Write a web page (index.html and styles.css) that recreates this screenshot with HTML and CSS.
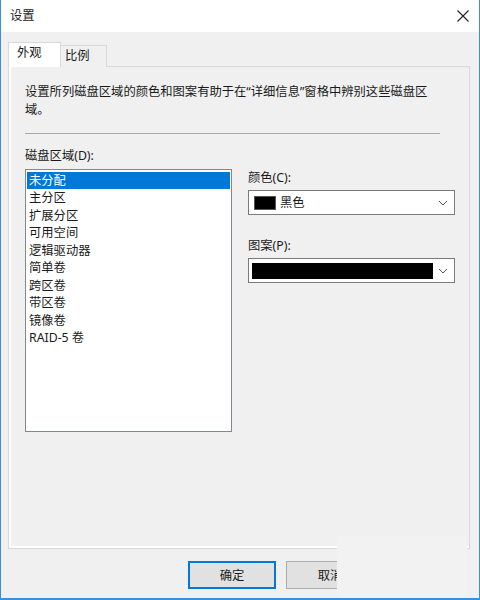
FILE: index.html
```html
<!DOCTYPE html>
<html lang="zh-CN">
<head>
<meta charset="utf-8">
<title>设置</title>
<link rel="stylesheet" href="styles.css">
</head>
<body>
<div class="window">
  <div class="titlebar">
    <span class="title">设置</span>
    <svg class="close" width="12" height="12" viewBox="0 0 12 12"><path d="M0.5 0.5 L11.5 11.5 M11.5 0.5 L0.5 11.5" stroke="#222" stroke-width="1.1" fill="none"/></svg>
  </div>
  <div class="body">
    <div class="tabs">
      <div class="tab active">外观</div>
      <div class="tab">比例</div>
    </div>
    <div class="panel">
      <p class="desc">设置所列磁盘区域的颜色和图案有助于在“详细信息”窗格中辨别这些磁盘区域。</p>
      <div class="sep"></div>
      <div class="label">磁盘区域(D):</div>
      <div class="cols">
        <ul class="listbox">
          <li class="selected">未分配</li>
          <li>主分区</li>
          <li>扩展分区</li>
          <li>可用空间</li>
          <li>逻辑驱动器</li>
          <li>简单卷</li>
          <li>跨区卷</li>
          <li>带区卷</li>
          <li>镜像卷</li>
          <li>RAID-5 卷</li>
        </ul>
        <div class="side">
          <div class="label">颜色(C):</div>
          <div class="combo">
            <span class="swatch"></span>
            <span class="combo-text">黑色</span>
            <svg class="chev" width="10" height="6" viewBox="0 0 10 6"><path d="M1 1 L5 5 L9 1" stroke="#555" stroke-width="1" fill="none"/></svg>
          </div>
          <div class="label second">图案(P):</div>
          <div class="combo">
            <span class="pattern"></span>
            <svg class="chev" width="10" height="6" viewBox="0 0 10 6"><path d="M1 1 L5 5 L9 1" stroke="#555" stroke-width="1" fill="none"/></svg>
          </div>
        </div>
      </div>
    </div>
    <div class="buttons">
      <button class="btn default">确定</button>
      <button class="btn">取消</button>
    </div>
  </div>
  <div class="cutout"></div>
</div>
</body>
</html>
```

FILE: styles.css
```css
html, body {
  margin: 0;
  padding: 0;
}
body {
  background: #f0f0f0;
  font-family: "Noto Sans", "Noto Sans CJK SC", sans-serif;
  font-size: 12.3px;
  color: #1a1a1a;
}
.window {
  position: relative;
  width: 480px;
  height: 600px;
  box-sizing: border-box;
  border-left: 1px solid #3c8fdc;
  border-right: 1px solid #3c8fdc;
  border-bottom: 2px solid #3c8fdc;
  background: #f0f0f0;
  overflow: hidden;
}
.titlebar {
  height: 32px;
  background: #ffffff;
  display: flex;
  align-items: center;
  justify-content: space-between;
  padding: 0 10px 0 9px;
}
.title {
  font-size: 12.3px;
  line-height: 18px;
  color: #222;
}
.close {
  display: block;
}
.body {
  padding: 10px 0 0 7px;
}
.tabs {
  display: flex;
  align-items: flex-end;
  position: relative;
  z-index: 1;
  margin-bottom: -1px;
}
.tab {
  box-sizing: border-box;
  border: 1px solid #d9d9d9;
  border-bottom: none;
  line-height: 20px;
  height: 22px;
  width: 47px;
  padding-left: 4px;
  background: #f0f0f0;
  color: #1a1a1a;
}
.tab.active {
  background: #ffffff;
  height: 25px;
  width: 53px;
  padding-left: 8px;
  padding-top: 0;
  margin-right: -1px;
  position: relative;
  z-index: 2;
}
.panel {
  box-sizing: border-box;
  width: 462px;
  height: 483px;
  border: 1px solid #d9d9d9;
  box-shadow: inset 2px -2px 0 #ffffff;
  background: #f0f0f0;
  padding: 16px 0 0 16px;
}
.desc {
  margin: 0;
  width: 410px;
  line-height: 18px;
}
.sep {
  width: 415px;
  height: 1px;
  background: #a9a9a9;
  margin-top: 14px;
  margin-bottom: 13px;
}
.label {
  line-height: 18px;
}
.cols {
  display: flex;
  gap: 16px;
  margin-top: 4px;
}
.listbox {
  list-style: none;
  margin: 0;
  box-sizing: border-box;
  width: 207px;
  height: 263px;
  border: 1px solid #828790;
  background: #ffffff;
  padding: 2px 1px 0 1px;
}
.listbox li {
  line-height: 17.45px;
  height: 17.45px;
  padding-left: 2px;
}
.listbox li.selected {
  background: #0078d7;
  color: #ffffff;
}
.side {
  display: flex;
  flex-direction: column;
  width: 207px;
}
.combo {
  box-sizing: border-box;
  height: 25px;
  width: 207px;
  margin-top: 3px;
  border: 1px solid #7a7a7a;
  background: #ffffff;
  display: flex;
  align-items: center;
  padding-left: 5px;
}
.swatch {
  width: 22px;
  height: 14px;
  box-sizing: border-box;
  background: #000000;
  border: 1px solid #555;
  margin-right: 4px;
}
.combo-text {
  flex: 1;
  line-height: 18px;
}
.pattern {
  width: 181px;
  height: 16px;
  background: #000000;
  margin-left: -2px;
  flex: none;
}
.chev {
  display: block;
  margin-left: auto;
  margin-right: 6px;
}
.label.second {
  margin-top: 22px;
}
.buttons {
  display: flex;
  gap: 10px;
  padding-left: 180px;
  margin-top: 12px;
}
.btn {
  box-sizing: border-box;
  width: 88px;
  height: 28px;
  background: #e1e1e1;
  border: 1px solid #adadad;
  font-family: "Noto Sans", "Noto Sans CJK SC", sans-serif;
  font-size: 12.3px;
  color: #1a1a1a;
  padding: 0;
  margin: 0;
}
.btn.default {
  border: 2px solid #0078d7;
}
.cutout {
  position: absolute;
  left: 336px;
  top: 536px;
  width: 130px;
  height: 70px;
  background: #f2f2f2;
}
```
